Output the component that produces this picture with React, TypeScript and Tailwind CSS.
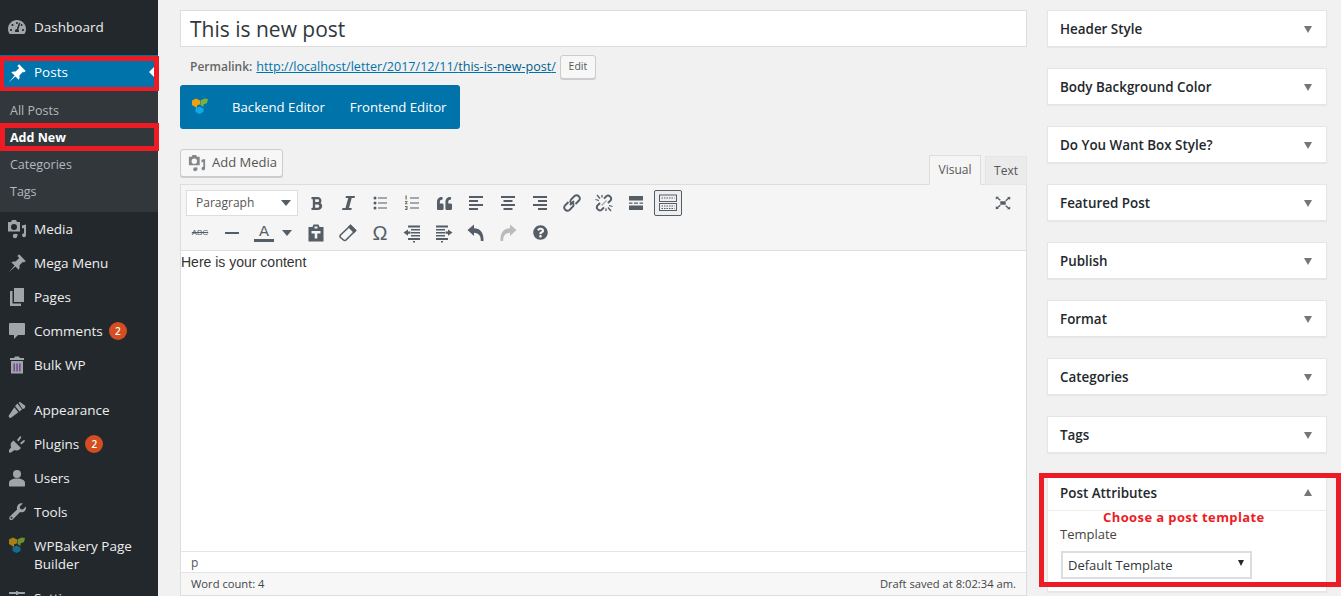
import React from "react";
import { FaTachometerAlt, FaBold, FaQuoteLeft, FaQuestionCircle, FaSlidersH } from "react-icons/fa";

const sans = "font-['Open_Sans',sans-serif]";

type P = { className?: string };

const Pin = ({ className }: P) => (
  <svg viewBox="0 0 20 20" className={className} fill="currentColor">
    <path d="M10.4 3.1l1.7-1.8 6.600 6.600-1.800 1.700-.9-.8-3.600 3.600c.4 1.500.2 3.100-.7 4.300L8.400 13.400l-6.400 5.600 5.600-6.400-3.300-3.300c1.200-.9 2.800-1.100 4.300-.7l3.600-3.600z" />
  </svg>
);
const MediaIcon = ({ className }: P) => (
  <svg viewBox="0 0 20 20" className={className} fill="currentColor">
    <path fillRule="evenodd" d="M1 3h3l1-2h4l1 2h3v9.500H1zM7 5a3 3 0 100 6 3 3 0 000-6z" />
    <path d="M15 6.500l4-1v10.700a2 2 0 11-2-2V9l-2 .5z" />
    <circle cx="8" cy="17" r="2.200" />
    <path d="M9 15h1.500v2H9z" />
  </svg>
);
const PagesIcon = ({ className }: P) => (
  <svg viewBox="0 0 20 20" className={className} fill="currentColor">
    <path d="M7 1h10v14H7z" />
    <path d="M3 4h2.500v12.500H14V19H3z" />
  </svg>
);
const CommentIcon = ({ className }: P) => (
  <svg viewBox="0 0 20 20" className={className} fill="currentColor">
    <path d="M3 2h14a1 1 0 011 1v10a1 1 0 01-1 1h-6l-4 4v-4H3a1 1 0 01-1-1V3a1 1 0 011-1z" />
  </svg>
);
const TrashIcon = ({ className }: P) => (
  <svg viewBox="0 0 20 20" className={className}>
    <path fill="currentColor" d="M8 1.500h4l1 1.500h4v2H3V3h4zM4 6h12v12.500H4z" />
    <path fill="#6b3a8a" d="M6.500 8.500h1.300v8H6.500zM9.400 8.500h1.300v8H9.400zM12.200 8.500h1.300v8h-1.300z" />
  </svg>
);
const Brush = ({ className }: P) => (
  <svg viewBox="0 0 20 20" className={className} fill="currentColor">
    <path d="M11.500 2.500l1.500-.5 5.500 4-1 2.500-2 .5zM10.500 3.500l4.500 6-2.500 2-4.500-5.500z" />
    <path d="M7.300 7.300l4.100 5-7.400 5.500c-1 .6-2.700-.7-2.300-2.100z" />
  </svg>
);
const Plug = ({ className }: P) => (
  <svg viewBox="0 0 20 20" className={className} fill="currentColor">
    <path d="M6.500 6.500l7.500 7.500-1.500 1.500c-1.500 1.200-3.500 1.200-5 .4L4 18.500H2v-2.500l2.200-2.700c-.9-1.500-.8-3.500.4-5z" />
    <path d="M10 6l2.800-3.500c.7-.7 2 .3 1.300 1.200L11.500 7.500zM13 9l3.500-2.800c.9-.7 1.900.6 1.200 1.300L14.500 10.500z" />
  </svg>
);
const UserIcon = ({ className }: P) => (
  <svg viewBox="0 0 20 20" className={className} fill="currentColor">
    <circle cx="10" cy="6" r="4" />
    <path d="M7.500 10.500h5c3 .7 5.500 2 5.500 4v3c0 .6-.4 1-1 1H3c-.6 0-1-.4-1-1v-3c0-2 2.500-3.300 5.500-4z" />
  </svg>
);
const Wrench = ({ className }: P) => (
  <svg viewBox="0 0 20 20" className={className} fill="currentColor">
    <path fillRule="evenodd" d="M13 1.500c1-.3 2-.3 2.800 0l-3 3 .5 2.500 2.500.5 3-3c.4 1.400.1 3.400-1 4.500-1.300 1.300-3.100 1.600-4.700 1L6 17.200c-1 1-2.200 1.300-3.200.3s-.7-2.200.3-3.200l7-6.800c-.5-1.800-.2-3.500 1-4.700.5-.6 1.200-1.100 1.900-1.300zM4.500 14.800a1 1 0 100 2 1 1 0 000-2z" />
  </svg>
);
const Italic = () => (
  <svg viewBox="0 0 20 20" className="w-5 h-5 text-[#555d66]" fill="currentColor">
    <path d="M8 3h9l-.5 2h-2.800L11 15h2.800l-.5 2H4l.5-2h3L10.200 5H7.500z" />
  </svg>
);
const Eraser = () => (
  <svg viewBox="0 0 20 20" className="w-5 h-5 text-[#555d66]" fill="none" stroke="currentColor" strokeWidth="1.600">
    <path d="M12.500 2.500l5 5-9.500 9.500c-.7.700-1.800.700-2.500 0l-3-2.500c-.7-.7-.7-1.800 0-2.500z" />
    <path d="M11 4l5 5 1.500-1.500-5-5z" fill="currentColor" />
  </svg>
);
const Bakery = ({ className, a, b, c }: P & { a: string; b: string; c: string }) => (
  <svg viewBox="0 0 16 16" className={className}>
    <path fill={a} d="M0 2.500L4 .5 8 2.500v3.700L5 7.500V10L0 7z" />
    <path fill={b} d="M8.500 2.500L12.500.5 16 1 15 5l-3.500 1.500V9L8.500 7z" />
    <path fill={c} d="M3.500 10.500L7.500 8.500l4 2v3.500l-4 2-4-2z" />
  </svg>
);

const Line = ({ y, x1, x2, w = 2 }: { y: number; x1: number; x2: number; w?: number }) => (
  <path d={`M${x1} ${y}H${x2}`} stroke="currentColor" strokeWidth={w} />
);
const Align = ({ kind }: { kind: "l" | "c" | "r" }) => {
  const pos = (long: boolean) => {
    const w = long ? 14 : 9;
    if (kind === "l") return [3, 3 + w];
    if (kind === "r") return [17 - w, 17];
    return [10 - w / 2, 10 + w / 2];
  };
  return (
    <svg viewBox="0 0 20 20" className="w-5 h-5 text-[#555d66]">
      {[4, 8, 12, 16].map((y, i) => {
        const [a, b] = pos(i % 2 === 0);
        return <Line key={y} y={y} x1={a} x2={b} />;
      })}
    </svg>
  );
};
const Ul = () => (
  <svg viewBox="0 0 20 20" className="w-5 h-5 text-[#555d66]" fill="currentColor">
    <circle cx="5" cy="5" r="1.500" /><circle cx="5" cy="10" r="1.500" /><circle cx="5" cy="15" r="1.500" />
    <path d="M8 4.500h9v1H8zM8 9.500h9v1H8zM8 14.500h9v1H8z" />
  </svg>
);
const Ol = () => (
  <svg viewBox="0 0 20 20" className="w-5 h-5 text-[#555d66]" fill="currentColor">
    <path fill="#7a6a5a" d="M3.500 2.500h1.200v4H3.500zM3 8h2.500v1L4 10.200h1.500v1H3v-1L4.300 9H3zM3 13h2.500v4H3v-1h1.400v-.5H3.500v-.8h.9V14H3z" />
    <path d="M8 4.500h9v1H8zM8 9.500h9v1H8zM8 14.500h9v1H8z" />
  </svg>
);
const LinkIcon = () => (
  <svg viewBox="0 0 20 20" className="w-5 h-5 text-[#555d66]" fill="none" stroke="currentColor" strokeWidth="1.900">
    <path d="M8 12l4-4M6.500 9L3 12.500a3.200 3.200 0 004.500 4.500L11 13.500a3.200 3.200 0 000-3.500M13.500 11L17 7.500A3.200 3.200 0 0012.500 3L9 6.500a3.200 3.200 0 000 3.500" />
  </svg>
);
const UnlinkIcon = () => (
  <svg viewBox="0 0 20 20" className="w-5 h-5 text-[#555d66]" fill="none" stroke="currentColor" strokeWidth="1.900">
    <path d="M6 10l-2.800 2.700a3.200 3.200 0 004.300 4.300L10 14.300M14 10l2.800-2.700a3.200 3.200 0 00-4.300-4.300L10 5.700" />
    <path d="M3 2l3 3.500M1.500 6.500l3.500 1M17 18l-3-3.500M18.500 13.500l-3.500-1M8 2v2.500M12 18v-2.500" strokeWidth="1.300" />
    <path d="M7.500 12.500l5-5" stroke="#aaaaaa" strokeWidth="1.300" />
  </svg>
);
const MoreIcon = () => (
  <svg viewBox="0 0 20 20" className="w-5 h-5 text-[#555d66]" fill="currentColor">
    <path d="M3 3h14v4.500H3zM3 12.500h14V17H3zM3 9.500h3.500v1.200H3zM8 9.500h4v1.200H8zM13.500 9.500H17v1.200h-3.500z" />
  </svg>
);
const KitchenIcon = () => (
  <svg viewBox="0 0 20 20" className="w-5 h-5 text-[#555d66]" fill="none" stroke="currentColor" strokeWidth="1">
    <rect x="1.500" y="2" width="17" height="6.500" />
    <rect x="1.500" y="10.500" width="17" height="7" />
    <path d="M3.500 5h13M3.500 13h13M3.500 15.500h13" strokeDasharray="1.500 1" strokeWidth="1.200" />
  </svg>
);
const PasteIcon = () => (
  <svg viewBox="0 0 20 20" className="w-5 h-5 text-[#555d66]" fill="currentColor">
    <path fillRule="evenodd" d="M2.500 4h4l1-2.500h5l1 2.500h4v14.500h-15zM8.500 3.500v2h3v-2zM5.500 8v2.500h3.200v5h2.600v-5h3.200V8z" />
  </svg>
);
const Outdent = () => (
  <svg viewBox="0 0 20 20" className="w-5 h-5 text-[#555d66]" fill="currentColor">
    <path d="M6 2.500h12v2H6zM9 6h9v1.500H9zM9 9h9v1.500H9zM9 12h9v1.500H9zM6 15h12v2H6zM11 18h2v1.500h-2zM1.500 9.500L6 6.500v2h2.500v2.200H6v2z" />
  </svg>
);
const Indent = () => (
  <svg viewBox="0 0 20 20" className="w-5 h-5 text-[#555d66]" fill="currentColor">
    <path d="M2 2.500h12v2H2zM2 6h9v1.500H2zM2 9h9v1.500H2zM2 12h9v1.500H2zM2 15h12v2H2zM7 18h2v1.500H7zM18.500 9.500L14 6.500v2h-2.500v2.200H14v2z" />
  </svg>
);
const Undo = ({ flip, cls }: { flip?: boolean; cls: string }) => (
  <svg viewBox="0 0 20 20" className={`w-5 h-5 ${cls} ${flip ? "-scale-x-100" : ""}`} fill="currentColor">
    <path d="M1.500 7L8 1.500v3.700c6 0 10 4.300 9.500 12.800h-2.700c.2-5-1.700-8-6.800-8.300V13z" />
  </svg>
);
const FullIcon = () => (
  <svg viewBox="0 0 20 20" className="w-[18px] h-[18px] text-[#555d66]" fill="currentColor">
    <path d="M7 8h6v4H7zM2 3h3.500l-1 1 3 2.500-1 1-3-2.500-1.500 1zM18 3v3.500l-1.500-1-3 2.500-1-1 3-2.500-1-1zM2 17v-3.500l1.500 1 3-2.500 1 1-3 2.500 1 1zM18 17h-3.500l1-1-3-2.500 1-1 3 2.500 1.500-1z" />
  </svg>
);

const MenuIconBox = ({ children }: { children: React.ReactNode }) => (
  <span className="w-[34px] flex justify-center pr-[1px] text-[#a0a5aa] shrink-0">{children}</span>
);

const MenuRow = ({ icon, label, badge }: { icon: React.ReactNode; label: string; badge?: string }) => (
  <div className="flex items-center h-[34px] text-[13.500px] text-[#eeeeee]">
    <MenuIconBox>{icon}</MenuIconBox>
    <span>{label}</span>
    {badge && (
      <span className="ml-[6px] w-[18px] h-[18px] rounded-full bg-[#d54e21] text-white text-[10px] font-semibold flex items-center justify-center">
        {badge}
      </span>
    )}
  </div>
);

const Sub = ({ label, strong }: { label: string; strong?: boolean }) => (
  <div className={`h-[27px] flex items-center pl-[10px] text-[12.500px] ${strong ? "font-bold text-white" : "text-[#b4b9be]"}`}>
    <span className="translate-y-px">{label}</span>
  </div>
);

const Sidebar = () => (
  <aside className="w-[158px] shrink-0 bg-[#23282d] pt-[10px]">
    <MenuRow icon={<FaTachometerAlt className="w-[18px] h-[18px]" />} label="Dashboard" />
    <div className="h-[11px]" />
    <div className="relative h-[35px] bg-[#0073aa] flex items-center text-[13.500px] text-white">
      <MenuIconBox><Pin className="w-5 h-5 text-white" /></MenuIconBox>
      <span>Posts</span>
      <span className="absolute right-[4px] top-[12px] border-y-[5px] border-y-transparent border-r-[5px] border-r-white" />
      <span className="absolute -right-px left-0 top-px bottom-[-1px] border-t-[5px] border-b-[4px] border-l-[4px] border-r-[5px] border-[#ed1c24]" />
    </div>
    <div className="bg-[#32373c] pt-[7px] pb-[7px] h-[122px]">
      <Sub label="All Posts" />
      <div className="relative">
        <Sub label="Add New" strong />
        <span className="absolute -right-px left-0 top-[-1px] h-[28px] border-y-[5px] border-l-[5px] border-r-[5px] border-[#ed1c24]" />
      </div>
      <Sub label="Categories" />
      <Sub label="Tags" />
    </div>
    <MenuRow icon={<MediaIcon className="w-5 h-5" />} label="Media" />
    <MenuRow icon={<Pin className="w-5 h-5" />} label="Mega Menu" />
    <MenuRow icon={<PagesIcon className="w-5 h-5" />} label="Pages" />
    <MenuRow icon={<CommentIcon className="w-5 h-5" />} label="Comments" badge="2" />
    <MenuRow icon={<TrashIcon className="w-5 h-5" />} label="Bulk WP" />
    <div className="h-[11px]" />
    <MenuRow icon={<Brush className="w-5 h-5" />} label="Appearance" />
    <MenuRow icon={<Plug className="w-5 h-5" />} label="Plugins" badge="2" />
    <MenuRow icon={<UserIcon className="w-5 h-5" />} label="Users" />
    <MenuRow icon={<Wrench className="w-5 h-5" />} label="Tools" />
    <div className="flex text-[13.500px] leading-[18px] text-[#eeeeee] pt-[8px] h-[52px]">
      <MenuIconBox>
        <Bakery className="w-4 h-4" a="#a87f14" b="#6f8f2f" c="#146d8f" />
      </MenuIconBox>
      <span className="w-[120px]">WPBakery Page Builder</span>
    </div>
    <MenuRow icon={<FaSlidersH className="w-4 h-4" />} label="Settings" />
  </aside>
);

const Btn = ({ children, w = "w-8" }: { children: React.ReactNode; w?: string }) => (
  <span className={`${w} h-[30px] flex items-center justify-center shrink-0`}>{children}</span>
);

const Caret = ({ cls = "" }: { cls?: string }) => (
  <span className={`border-x-[5px] border-x-transparent border-t-[6px] border-t-[#555d66] ${cls}`} />
);

const Toolbar = () => (
  <div className="bg-[#f5f5f5] border-b border-[#dddddd] h-[66px] pt-[3px] text-[#555d66]">
    <div className="flex items-center pl-[5px] pr-[4px] h-[30px]">
      <span className="w-[112px] h-[26px] bg-white border border-[#dddddd] flex items-center justify-between pl-[9px] pr-[6px] text-[12px] text-[#555555] shrink-0">
        Paragraph <Caret />
      </span>
      <span className="w-[2px]" />
      <Btn><FaBold className="w-[15px] h-[15px]" /></Btn>
      <Btn><Italic /></Btn>
      <Btn><Ul /></Btn>
      <Btn><Ol /></Btn>
      <Btn><FaQuoteLeft className="w-[15px] h-[15px]" /></Btn>
      <Btn><Align kind="l" /></Btn>
      <Btn><Align kind="c" /></Btn>
      <Btn><Align kind="r" /></Btn>
      <Btn><LinkIcon /></Btn>
      <Btn><UnlinkIcon /></Btn>
      <Btn><MoreIcon /></Btn>
      <span className="w-[28px] h-[26px] mx-[2px] border border-[#555d66] rounded-[2px] bg-[#eeeeee] flex items-center justify-center shrink-0">
        <KitchenIcon />
      </span>
      <span className="ml-auto mr-[3px]"><Btn><FullIcon /></Btn></span>
    </div>
    <div className="flex items-center pl-[3px] h-[29px]">
      <Btn><span className="text-[8px] line-through font-['Liberation_Sans',sans-serif]">ABC</span></Btn>
      <Btn><span className="w-[14px] h-[2px] bg-[#555d66]" /></Btn>
      <Btn>
        <span className="flex flex-col items-center leading-none text-[15px] font-['Liberation_Sans',sans-serif] border-b-[3px] border-[#555d66] w-[20px] pb-[1px]">A</span>
      </Btn>
      <Btn w="w-[20px]"><Caret cls="mr-[10px] -translate-x-[-2px]" /></Btn>
      <Btn><PasteIcon /></Btn>
      <Btn><Eraser /></Btn>
      <Btn><span className="text-[20px] font-['Liberation_Sans',sans-serif] leading-none">Ω</span></Btn>
      <Btn><Outdent /></Btn>
      <Btn><Indent /></Btn>
      <Btn><Undo cls="text-[#555d66]" /></Btn>
      <Btn><Undo flip cls="text-[#bbbbbb]" /></Btn>
      <Btn><FaQuestionCircle className="w-[15px] h-[15px]" /></Btn>
    </div>
  </div>
);

const Main = () => (
  <main className="w-[847px] ml-[22px] shrink-0 pt-[10px]">
    <div className="h-[37px] bg-white border border-[#dddddd] flex items-center pl-[9px] text-[21px] text-[#32373c]">
      <span className="translate-y-px">This is new post</span>
    </div>
    <div className="h-[24px] mt-[8px] flex items-center pl-[10px] text-[#666666]">
      <span className="font-semibold text-[12px]">Permalink:</span>
      <span className="ml-[4px] text-[12.600px] text-[#0073aa] underline">
        http://localhost/letter/2017/12/11/<span className="font-medium text-[#005f8c]">this-is-new-post</span>/
      </span>
      <span className="ml-[4px] w-[36px] h-[24px] bg-[#f7f7f7] border border-[#cccccc] rounded-[3px] shadow-[0_1px_0_#cccccc] flex items-center justify-center text-[10.500px] text-[#555555]">
        Edit
      </span>
    </div>
    <div className="w-[280px] h-[44px] mt-[6px] bg-[#0073aa] rounded-[3px] flex items-center text-white text-[13.200px]">
      <Bakery className="w-4 h-4 ml-[12px] -translate-y-px" a="#f0a20e" b="#7fb13a" c="#0fa8ea" />
      <span className="ml-[24px] translate-y-px">Backend Editor</span>
      <span className="ml-[25px] translate-y-px">Frontend Editor</span>
    </div>
    <div className="flex items-end justify-between h-[35px] mt-[20px]">
      <span className="w-[103px] h-[28px] mb-[7px] bg-[#f7f7f7] border border-[#cccccc] rounded-[3px] shadow-[0_1px_0_#cccccc] flex items-center pl-[7px] text-[13px] text-[#555555]">
        <MediaIcon className="w-[18px] h-[18px] text-[#82878c] mr-[6px]" /> Add Media
      </span>
      <div className="flex items-end text-[12px] h-[30px] translate-y-px">
        <span className="w-[52px] h-[30px] bg-[#f5f5f5] border border-[#dddddd] border-b-[#f5f5f5] flex items-center justify-center text-[#555555]">Visual</span>
        <span className="w-[42px] h-[29px] ml-[4px] bg-[#ebebeb] border border-[#e5e5e5] flex items-center justify-center text-[#555555]">Text</span>
      </div>
    </div>
    <div className="border border-[#dddddd] h-[412px] bg-white flex flex-col">
      <Toolbar />
      <div className="flex-1 pt-[3px] text-[14px] leading-[17px] text-[#333333] font-['Liberation_Sans',sans-serif]">
        Here is your content
      </div>
      <div className="h-[21px] border-t border-[#e5e5e5] pl-[10px] text-[12px] leading-[22px] text-[#555555]">p</div>
      <div className="h-[23px] bg-[#f7f7f7] border-t border-[#e5e5e5] flex items-center justify-between px-[10px] text-[11.200px] text-[#444444]">
        <span>Word count: 4</span>
        <span>Draft saved at 8:02:34 am.</span>
      </div>
    </div>
  </main>
);

const Box = ({ title }: { title: string }) => (
  <div className="h-[37px] bg-white border border-[#e5e5e5] shadow-[0_1px_1px_rgba(0,0,0,0.04)] flex items-center justify-between pl-[12px] pr-[14px] text-[13.400px] font-semibold text-[#23282d]">
    <span className="translate-y-px">{title}</span>
    <span className="translate-y-px border-x-[4px] border-x-transparent border-t-[7px] border-t-[#72777c]" />
  </div>
);

const Side = () => (
  <section className="w-[280px] ml-[20px] shrink-0 pt-[10px] flex flex-col gap-[21px]">
    {["Header Style", "Body Background Color", "Do You Want Box Style?", "Featured Post", "Publish", "Format", "Categories", "Tags"].map((t) => (
      <Box key={t} title={t} />
    ))}
    <div className="h-[118px] bg-white border border-[#e5e5e5] shadow-[0_1px_1px_rgba(0,0,0,0.04)] text-[#23282d]">
      <div className="h-[36px] border-b border-[#eeeeee] flex items-center justify-between pl-[12px] pr-[14px] text-[13.400px] font-semibold">
        <span className="translate-y-px">Post Attributes</span>
        <span className="border-x-[4px] border-x-transparent border-b-[7px] border-b-[#72777c]" />
      </div>
      <div className="pl-[12px] pt-[14px] text-[13px] leading-[18px] text-[#444444]">Template</div>
      <div className="ml-[13px] mt-[8px] w-[191px] h-[28px] border-2 border-[#dddddd] flex items-center justify-between pl-[5px] pr-[6px] text-[13px] text-[#32373c]">
        <span className="translate-y-px">Default Template</span>
        <span className="border-x-[3px] border-x-transparent border-t-[6px] border-t-[#23282d] -translate-y-[2px]" />
      </div>
    </div>
  </section>
);

export default function App() {
  return (
    <div className={`relative flex h-[596px] w-[1341px] overflow-hidden bg-[#f1f1f1] ${sans}`}>
      <Sidebar />
      <Main />
      <Side />
      <span className="absolute left-[1039px] top-[473px] w-[302px] h-[114px] border-[5px] border-[#ed1c24]" />
      <span className="absolute left-[1103px] top-[508px] text-[13px] leading-[18px] font-bold text-[#ed1c24] tracking-[0.4px]">
        Choose a post template
      </span>
    </div>
  );
}
